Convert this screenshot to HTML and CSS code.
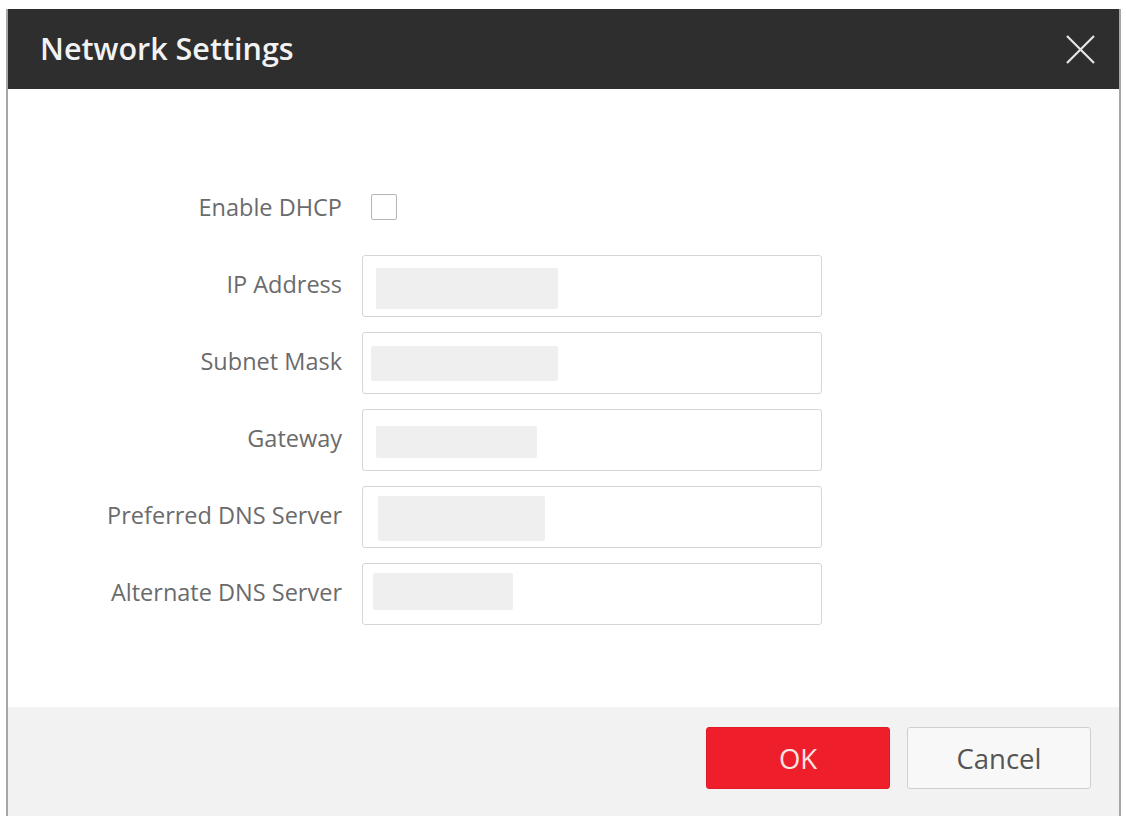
FILE: index.html
```html
<!DOCTYPE html>
<html>
<head>
<meta charset="utf-8">
<title>Network Settings</title>
<link rel="stylesheet" href="styles.css">
</head>
<body>
	<div class="dialog">
		<div class="dialog-head">
			<span class="dialog-title">Network Settings</span>
			<span class="close-btn">
				<svg width="31" height="31" viewBox="0 0 31 31"><path d="M2 2 L29 29 M29 2 L2 29" stroke="#e6e6e6" stroke-width="2.2" fill="none"/></svg>
			</span>
		</div>
		<div class="dialog-body">
			<div class="form">
				<label class="field-label dhcp-label">Enable DHCP</label>
				<div class="dhcp-cell"><span class="checkbox"></span></div>

				<label class="field-label">IP Address</label>
				<div class="input"><span class="mask mask-ip"></span></div>

				<label class="field-label">Subnet Mask</label>
				<div class="input"><span class="mask mask-subnet"></span></div>

				<label class="field-label">Gateway</label>
				<div class="input"><span class="mask mask-gateway"></span></div>

				<label class="field-label">Preferred DNS Server</label>
				<div class="input"><span class="mask mask-dns1"></span></div>

				<label class="field-label">Alternate DNS Server</label>
				<div class="input"><span class="mask mask-dns2"></span></div>
			</div>
		</div>
		<div class="dialog-foot">
			<button class="btn btn-ok">OK</button>
			<button class="btn btn-cancel">Cancel</button>
		</div>
	</div>
</body>
</html>
```

FILE: styles.css
```css
html, body {
 margin: 0;
 padding: 0;
 background: #fff;
 font-family: "Open Sans", "Noto Sans", sans-serif;
}
.dialog {
 margin: 9px 5px 0 6px;
 height: 807px;
 border-left: 2px solid #a6a6a6;
 border-right: 2px solid #a6a6a6;
 display: flex;
 flex-direction: column;
 box-sizing: border-box;
}
.dialog-head {
 height: 80px;
 background: #2e2e2e;
 display: flex;
 align-items: center;
 justify-content: space-between;
 padding: 0 23px 0 32px;
}
.dialog-title {
 color: #f2f2f2;
 font-size: 30.5px;
 font-weight: 600;
 margin-top: -2px;
}
.close-btn {
 display: flex;
 width: 31px;
 height: 31px;
}
.dialog-body {
 flex: 1;
 padding-top: 105px;
}
.form {
 display: grid;
 grid-template-columns: 334px 460px;
 column-gap: 20px;
 row-gap: 15px;
 align-items: center;
}
.field-label {
 text-align: right;
 color: #6b6b6b;
 font-size: 23.5px;
 line-height: 27px;
 padding-bottom: 3px;
}
.dhcp-label, .dhcp-cell {
 margin-bottom: 19px;
}
.dhcp-label {
 padding-bottom: 0;
}
.dhcp-cell {
 height: 27px;
 display: flex;
}
.checkbox {
 width: 24px;
 height: 24px;
 margin-left: 9px;
 border: 1.5px solid #b4b4b4;
 border-radius: 2px;
}
.input {
 height: 62px;
 box-sizing: border-box;
 border: 1.5px solid #d6d6d6;
 border-radius: 3px;
 position: relative;
}
.mask {
 position: absolute;
 background: #efefef;
 border-radius: 2px;
}
.mask-ip { left: 13px; top: 12px; width: 182px; height: 41px; }
.mask-subnet { left: 8px; top: 13px; width: 187px; height: 35px; }
.mask-gateway { left: 13px; top: 16px; width: 161px; height: 32px; }
.mask-dns1 { left: 15px; top: 9px; width: 167px; height: 45px; }
.mask-dns2 { left: 10px; top: 9px; width: 140px; height: 37px; }
.dialog-foot {
 height: 109px;
 background: #f2f2f2;
 display: flex;
 justify-content: flex-end;
 align-items: flex-start;
 gap: 17px;
 padding: 20px 28px 0 0;
 box-sizing: border-box;
}
.btn {
 width: 184px;
 height: 62px;
 font-family: "Open Sans", "Noto Sans", sans-serif;
 font-size: 27.5px;
 border-radius: 3px;
 cursor: pointer;
}
.btn-ok {
 background: #ee1f2b;
 border: 1px solid #e01b26;
 color: #fbe4e4;
}
.btn-cancel {
 background: #f8f8f8;
 border: 1.5px solid #cfcfcf;
 color: #555;
}
```
